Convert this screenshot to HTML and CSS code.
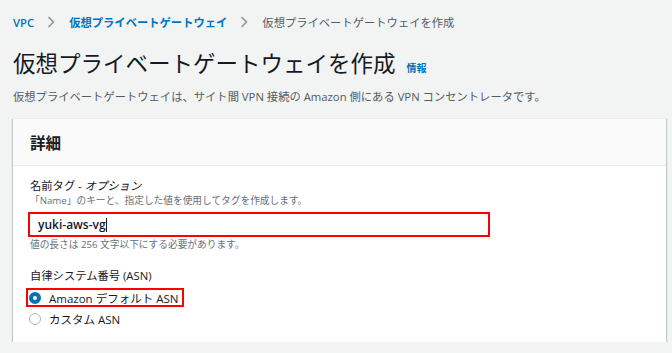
FILE: index.html
```html
<!DOCTYPE html>
<html lang="ja">
<head>
<meta charset="utf-8">
<title>仮想プライベートゲートウェイを作成</title>
<link rel="stylesheet" href="styles.css">
</head>
<body>
<div class="page">
  <nav class="breadcrumb">
    <a class="crumb-link" href="#">VPC</a>
    <svg class="chev" width="8" height="12" viewBox="0 0 8 12"><polyline points="1.5,1 6.5,6 1.5,11" fill="none" stroke="#879596" stroke-width="1.5"/></svg>
    <a class="crumb-link" href="#">仮想プライベートゲートウェイ</a>
    <svg class="chev" width="8" height="12" viewBox="0 0 8 12"><polyline points="1.5,1 6.5,6 1.5,11" fill="none" stroke="#879596" stroke-width="1.5"/></svg>
    <span class="crumb-current">仮想プライベートゲートウェイを作成</span>
  </nav>
  <div class="title-row">
    <h1 class="title">仮想プライベートゲートウェイを作成</h1>
    <a class="info" href="#">情報</a>
  </div>
  <p class="desc">仮想プライベートゲートウェイは、サイト間 VPN 接続の Amazon 側にある VPN コンセントレータです。</p>
  <section class="panel">
    <div class="panel-header"><h2 class="panel-title">詳細</h2></div>
    <div class="panel-body">
      <div class="label">名前タグ - <i>オプション</i></div>
      <div class="hint">「Name」のキーと、指定した値を使用してタグを作成します。</div>
      <div class="input">yuki-aws-vg<span class="caret"></span></div>
      <div class="hint constraint">値の長さは 256 文字以下にする必要があります。</div>
      <div class="label asn-label">自律システム番号 (ASN)</div>
      <div class="radio-row highlighted">
        <span class="radio checked"></span><span class="radio-text">Amazon デフォルト ASN</span>
      </div>
      <div class="radio-row">
        <span class="radio"></span><span class="radio-text">カスタム ASN</span>
      </div>
    </div>
  </section>
</div>
</body>
</html>
```
FILE: styles.css
```css
* { box-sizing: border-box; }
body {
  margin: 0;
  background: #f2f3f3;
  font-family: "Open Sans", "Noto Sans CJK JP", sans-serif;
  color: #16191f;
}
.page { padding: 13px 6px 0 13px; }
.breadcrumb {
  display: flex;
  align-items: center;
  height: 18px;
  font-size: 11.3px;
}
.crumb-link { color: #0073bb; text-decoration: none; font-weight: 600; }
.crumb-current { color: #545b64; }
.chev { margin: 0 14px 0 13px; }
.title-row {
  display: flex;
  align-items: baseline;
  height: 30px;
  margin-top: 18px;
}
.title {
  margin: 0;
  font-size: 22.5px;
  line-height: 30px;
  font-weight: 400;
  color: #16191f;
}
.info {
  margin-left: 11px;
  font-size: 10px;
  font-weight: 700;
  color: #0073bb;
  text-decoration: none;
}
.desc {
  margin: 9px 0 0;
  height: 18px;
  font-size: 11.3px;
  line-height: 18px;
  color: #545b64;
}
.panel {
  margin-top: 12px;
  background: #fff;
  box-shadow: 0 1px 1px 0 rgba(0,28,36,.3), 1px 1px 1px 0 rgba(0,28,36,.15), -1px 1px 1px 0 rgba(0,28,36,.15);
  border-top: 1px solid #eaeded;
}
.panel-header {
  height: 47px;
  background: #fafafa;
  border-bottom: 1px solid #eaeded;
  display: flex;
  align-items: center;
  padding: 0 17px;
}
.panel-title {
  margin: 0;
  font-size: 15.5px;
  font-weight: 700;
}
.panel-body {
  padding: 12px 17px 13px;
}
.label {
  font-size: 11.3px;
  line-height: 16px;
  height: 16px;
}
.hint {
  font-size: 9.7px;
  line-height: 14px;
  height: 14px;
  color: #687078;
}
.input {
  margin: 4px 0 0 -2px;
  width: 462px;
  height: 25px;
  border: 2px solid #ff0000;
  padding-left: 8px;
  display: flex;
  align-items: center;
  font-size: 12px;
  font-weight: 600;
  color: #16191f;
}
.caret {
  display: inline-block;
  width: 1px;
  height: 14px;
  background: #16191f;
}
.constraint { margin-top: 1px; }
.asn-label { margin-top: 16px; }
.radio-row {
  display: flex;
  align-items: center;
  height: 20px;
  gap: 8px;
  font-size: 11.5px;
  margin-left: -1px;
  white-space: nowrap;
}
.radio-row.highlighted {
  width: max-content;
  margin-top: 4px;
  margin-left: -4px;
  padding-left: 1px;
  padding-right: 4px;
  height: 19px;
  border: 2px solid #ff0000;
}
.radio {
  width: 12px;
  height: 12px;
  border-radius: 50%;
  border: 1px solid #aab7b8;
  background: #fff;
  flex: none;
}
.radio.checked { border: 4px solid #0073bb; }
.radio-row + .radio-row { margin-top: 2px; }
```
